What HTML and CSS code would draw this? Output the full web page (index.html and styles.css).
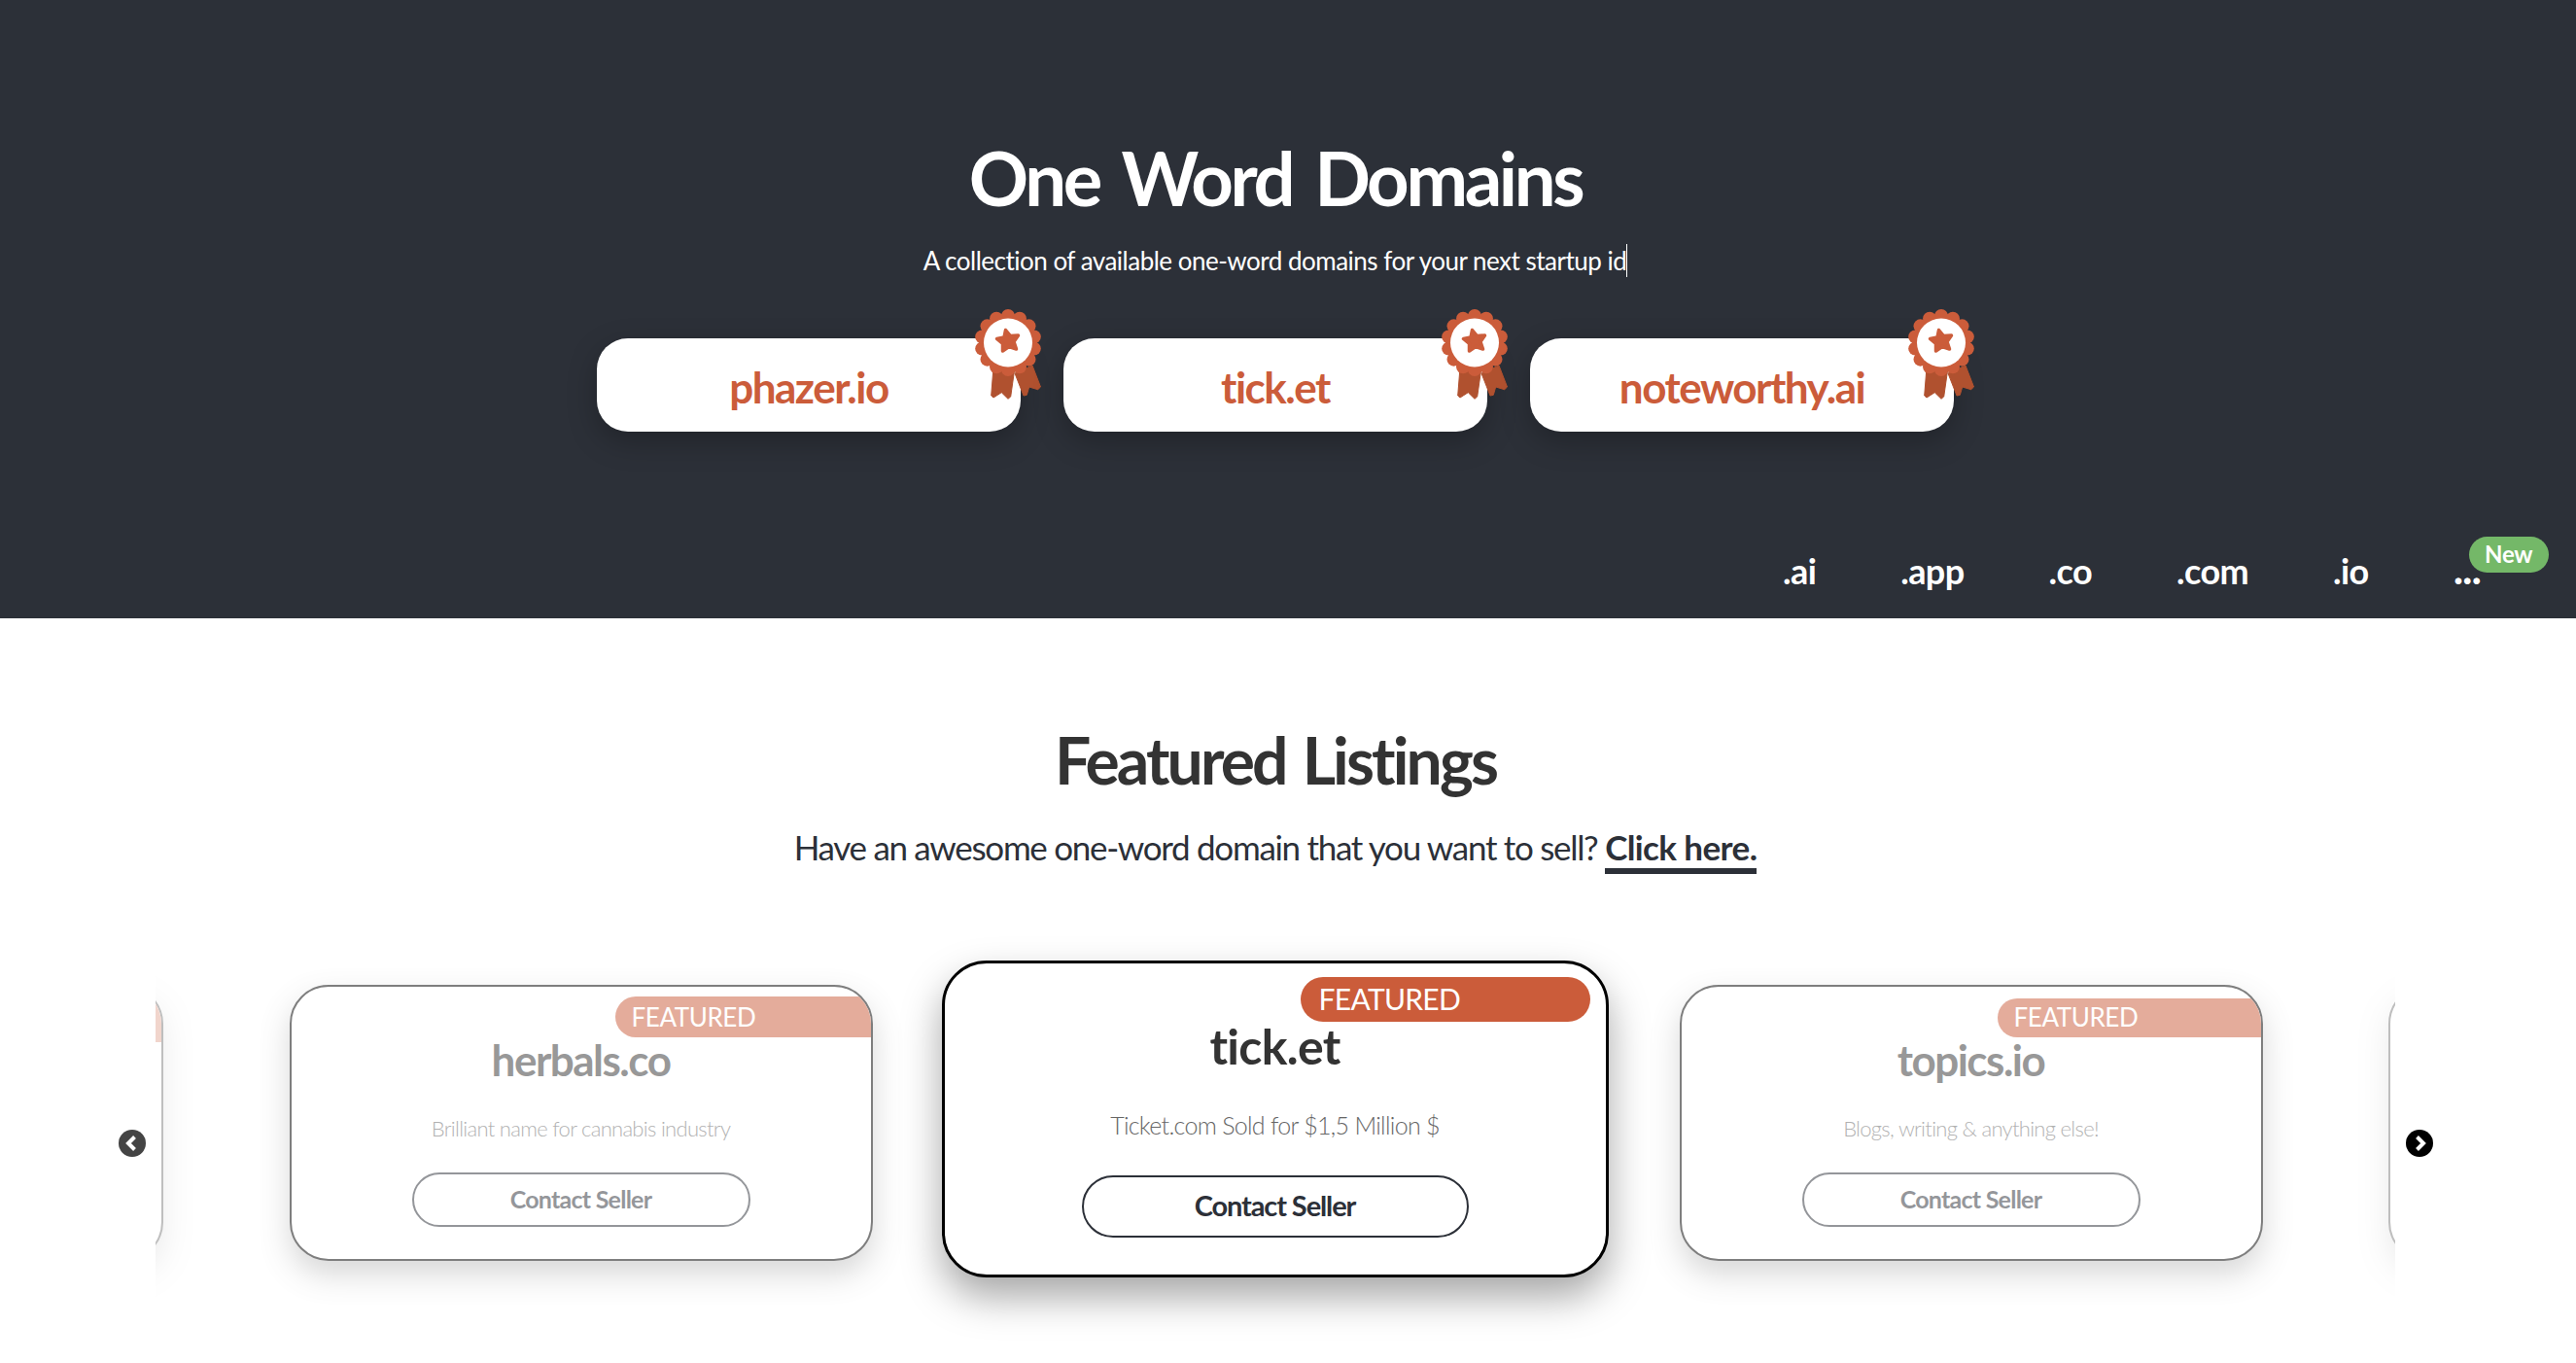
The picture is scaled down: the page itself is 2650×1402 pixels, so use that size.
FILE: index.html
```html
<!DOCTYPE html>
<html lang="en">
<head>
<meta charset="utf-8">
<title>One Word Domains</title>
<link rel="stylesheet" href="styles.css">
</head>
<body>
<svg class="defs" width="0" height="0" aria-hidden="true">
  <symbol id="ribbon" viewBox="0 0 69 93">
    <path fill="#b0512f" stroke="#b0512f" stroke-linejoin="round" d="M20 60 17.7 89 20 91 28.3 85.7 35 92.3 37.7 90 41.7 62Z"/>
    <path fill="#b0512f" stroke="#b0512f" stroke-linejoin="round" d="M42 66 51 89 54.3 88.3 56.7 80 65.7 82.7 68.5 80 60 58Z"/>
    <g fill="#cb5c3a">
      <circle cx="35" cy="34.5" r="30"/>
      <circle cx="35" cy="7" r="7"/><circle cx="46.93" cy="9.72" r="7"/><circle cx="56.5" cy="17.35" r="7"/>
      <circle cx="61.81" cy="28.38" r="7"/><circle cx="61.81" cy="40.62" r="7"/><circle cx="56.5" cy="51.65" r="7"/>
      <circle cx="46.93" cy="59.28" r="7"/><circle cx="35" cy="62" r="7"/><circle cx="23.07" cy="59.28" r="7"/>
      <circle cx="13.5" cy="51.65" r="7"/><circle cx="8.19" cy="40.62" r="7"/><circle cx="8.19" cy="28.38" r="7"/>
      <circle cx="13.5" cy="17.35" r="7"/><circle cx="23.07" cy="9.72" r="7"/>
    </g>
    <circle cx="35" cy="34.5" r="25" fill="#fff"/>
    <path fill="#cb5c3a" stroke="#cb5c3a" stroke-width="3.5" stroke-linejoin="round" d="M32.5 21.5 37.5 27.5 45.5 27 41 33.5 43.5 41 36 38.5 29.5 43 29.5 35.5 23.5 30.5 31 29Z"/>
  </symbol>
</svg>

<header class="hero">
  <h1 class="hero-title">One Word Domains</h1>
  <p class="hero-sub">A collection of available one-word domains for your next startup id<span class="caret"></span></p>
  <div class="pills">
    <a class="pill">phazer.io<svg class="ribbon"><use href="#ribbon"/></svg></a>
    <a class="pill">tick.et<svg class="ribbon"><use href="#ribbon"/></svg></a>
    <a class="pill">noteworthy.ai<svg class="ribbon"><use href="#ribbon"/></svg></a>
  </div>
  <nav class="tabs">
    <a class="tab">.ai</a>
    <a class="tab">.app</a>
    <a class="tab">.co</a>
    <a class="tab">.com</a>
    <a class="tab">.io</a>
    <a class="tab tab-more">...<span class="new">New</span></a>
  </nav>
</header>

<main class="listings">
  <h2 class="listings-title">Featured Listings</h2>
  <p class="listings-sub">Have an awesome one-word domain that you want to sell? <a class="listings-link">Click here.</a></p>
  <section class="carousel">
    <svg class="arrow arrow-prev" viewBox="0 0 28 28"><circle cx="14" cy="14" r="14"/><path d="M16.5 7.5 10 14l6.5 6.5"/></svg>
    <div class="viewport">
      <article class="card card-peek card-peek-left"><span class="badge"></span></article>
      <article class="card card-side">
        <span class="badge">FEATURED</span>
        <h3 class="domain">herbals.co</h3>
        <p class="desc">Brilliant name for cannabis industry</p>
        <a class="contact">Contact Seller</a>
      </article>
      <article class="card card-main">
        <span class="badge">FEATURED</span>
        <h3 class="domain">tick.et</h3>
        <p class="desc">Ticket.com Sold for $1,5 Million $</p>
        <a class="contact">Contact Seller</a>
      </article>
      <article class="card card-side card-side-right">
        <span class="badge">FEATURED</span>
        <h3 class="domain">topics.io</h3>
        <p class="desc">Blogs, writing &amp; anything else!</p>
        <a class="contact">Contact Seller</a>
      </article>
      <article class="card card-peek card-peek-right"></article>
    </div>
    <svg class="arrow arrow-next" viewBox="0 0 28 28"><circle cx="14" cy="14" r="14"/><path d="M11.5 7.5 18 14l-6.5 6.5"/></svg>
  </section>
</main>
</body>
</html>
```
FILE: styles.css
```css
* { box-sizing: border-box; }
html, body { margin: 0; padding: 0; }
body { font-family: "Lato", "Open Sans", sans-serif; background: #fff; color: #333; overflow: hidden; }
.defs { position: absolute; }
h1, h2, h3, p { margin: 0; }

.hero {
  background: #2c3038;
  color: #fff;
  height: 636px;
  padding: 139px 26px 0 0;
  display: flex;
  flex-direction: column;
  align-items: center;
}
.hero-title { font-size: 76px; line-height: 88px; font-weight: 700; letter-spacing: -3.4px; word-spacing: 8px; }
.hero-sub { font-size: 26px; line-height: 36px; margin-top: 23px; font-weight: 400; letter-spacing: -0.5px; }
.caret { display: inline-block; width: 1px; height: 34px; background: #fff; vertical-align: -7px; }
.pills { display: flex; gap: 44px; margin-top: 62px; }
.pill {
  position: relative;
  width: 436px;
  height: 96px;
  border-radius: 32px;
  background: #fff;
  color: #cb5c3a;
  font-size: 44px;
  font-weight: 700;
  letter-spacing: -1.5px;
  display: flex;
  align-items: center;
  justify-content: center;
  padding-top: 4px;
  box-shadow: 0 10px 30px rgba(0, 0, 0, .25);
}
.ribbon { position: absolute; left: 388px; top: -30px; width: 69px; height: 93px; }
.tabs {
  align-self: stretch;
  display: flex;
  justify-content: flex-end;
  align-items: baseline;
  gap: 87px;
  margin-top: 118px;
  padding-right: 72px;
  font-size: 36px;
  line-height: 44px;
  font-weight: 700;
  letter-spacing: -0.6px;
}
.tab { position: relative; }
.tab-more { font-size: 44px; letter-spacing: -1px; }
.new {
  position: absolute;
  left: 16px;
  top: -10px;
  width: 82px;
  height: 37px;
  border-radius: 19px;
  background: #74b868;
  font-size: 24px;
  line-height: 35px;
  letter-spacing: -0.3px;
  text-align: center;
}

.listings { padding: 108px 26px 0 0; text-align: center; }
.listings-title { font-size: 66px; line-height: 76px; font-weight: 700; letter-spacing: -2.9px; word-spacing: 4px; color: #333; }
.listings-sub { font-size: 35px; line-height: 44px; margin-top: 29px; color: #2c3038; letter-spacing: -1.3px; font-weight: 400; }
.listings-link { font-weight: 700; letter-spacing: -0.6px; border-bottom: 6px solid #2c3038; padding-bottom: 1px; }

.carousel { position: relative; margin-right: -26px; margin-top: 67px; }
.viewport {
  width: 2304px;
  height: 442px;
  margin-left: 160px;
  overflow: hidden;
  display: flex;
  justify-content: center;
  align-items: flex-start;
  padding-top: 53px;
}
.arrow { position: absolute; top: 202px; width: 28px; height: 28px; }
.arrow path { fill: none; stroke: #fff; stroke-width: 4; }
.arrow-prev { left: 122px; fill: #444; }
.arrow-next { left: 2475px; fill: #000; }

.card {
  flex: none;
  position: relative;
  width: 600px;
  height: 284px;
  border: 2px solid #000;
  border-radius: 40px;
  background: #fff;
  overflow: hidden;
  display: flex;
  flex-direction: column;
  align-items: center;
  color: #333;
  padding-top: 50px;
  box-shadow: 0 14px 30px rgba(0, 0, 0, .3);
}
.card-side { opacity: .5; margin-right: 71px; }
.card-peek { opacity: .25; }
.card-peek-left { margin-right: 130px; }
.card-peek-left .badge { top: 15px; }
.card-peek-right { margin-left: 129px; }
.card-side-right { margin-right: 0; margin-left: 73px; }
.badge {
  position: absolute;
  right: 0;
  top: 10px;
  width: 263px;
  height: 42px;
  padding-left: 17px;
  border-radius: 21px 0 0 21px;
  background: #cb5c3a;
  color: #fff;
  font-size: 26px;
  line-height: 42px;
  letter-spacing: -0.4px;
  text-align: left;
}
.domain { font-size: 44px; line-height: 50px; font-weight: 700; letter-spacing: -1.5px; }
.desc { font-size: 22px; line-height: 30px; margin-top: 31px; letter-spacing: -0.7px; font-weight: 300; color: #666; }
.contact {
  width: 348px;
  height: 56px;
  margin-top: 30px;
  border: 2px solid #2c3038;
  border-radius: 28px;
  color: #2c3038;
  font-size: 25px;
  line-height: 50px;
  font-weight: 700;
  letter-spacing: -0.75px;
  text-align: center;
}
.card-main {
  width: 686px;
  height: 326px;
  margin-top: -25px;
  border-width: 3px;
  padding-top: 57px;
  box-shadow: 0 20px 40px rgba(0, 0, 0, .35);
  border-radius: 46px;
}
.card-main .badge {
  right: 16px;
  top: 14px;
  width: 298px;
  height: 46px;
  padding-left: 19px;
  border-radius: 23px;
  font-size: 30px;
  line-height: 44px;
  letter-spacing: -0.7px;
}
.card-main .domain { font-size: 50px; line-height: 56px; letter-spacing: -0.7px; }
.card-main .desc { font-size: 25px; line-height: 34px; margin-top: 36px; letter-spacing: -0.7px; }
.card-main .contact { width: 398px; height: 64px; margin-top: 35px; border-radius: 32px; font-size: 29px; line-height: 58px; letter-spacing: -1.1px; }
.card-side-right .badge { top: 12px; width: 271px; height: 40px; line-height: 38px; }
```
